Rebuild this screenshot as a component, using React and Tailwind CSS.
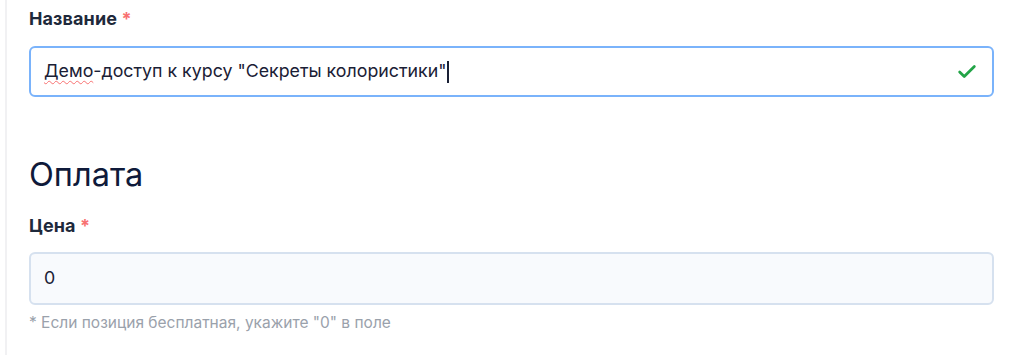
import React from 'react';
import { Check } from 'lucide-react';

function Label({ children }) {
  return (
    <p className="text-[18px] font-bold text-[#1e293b] leading-6 tracking-[0.1px]">
      {children} <span className="text-[#f87171]">*</span>
    </p>
  );
}

export default function App() {
  return (
    <div className="min-h-screen bg-white flex" style={{ fontFamily: 'Inter, "Noto Sans", sans-serif' }}>
      {/* Left rail */}
      <div className="w-[5px] shrink-0" />
      <div className="w-[2px] shrink-0 bg-[#f1f1f3]" />

      <div className="flex-1 pl-[22px] pr-[30px] pt-[7px]">
        {/* Name */}
        <Label>Название</Label>
        <div className="mt-[15px] h-[51px] rounded-[6px] border-2 border-[#7ab3fb] bg-white flex items-center pl-[13px] pr-[14px]">
          <span className="text-[17.8px] text-[#1a2035]">
            <span className="underline decoration-wavy decoration-[#f87171] decoration-1 underline-offset-[3px]">Демо</span>
            -доступ к курсу "Секреты колористики"
          </span>
          <span className="inline-block w-[2px] h-[22px] bg-[#1a2035] ml-[1px]" />
          <Check className="ml-auto w-[22px] h-[22px] text-[#22a447]" strokeWidth={3} />
        </div>

        {/* Payment */}
        <h2 className="mt-[58px] text-[32.5px] leading-10 text-[#0f1a3a] font-normal">Оплата</h2>
        <div className="mt-[19px]">
          <Label>Цена</Label>
        </div>
        <div className="mt-[14px] h-[53px] rounded-[6px] border-2 border-[#d6e1ef] bg-[#f8fafd] flex items-center pl-[13px]">
          <span className="text-[17.8px] text-[#1a2035]">0</span>
        </div>
        <p className="mt-[8px] text-[15.5px] leading-5 text-[#9aa1ab]">* Если позиция бесплатная, укажите "0" в поле</p>
      </div>
    </div>
  );
}
